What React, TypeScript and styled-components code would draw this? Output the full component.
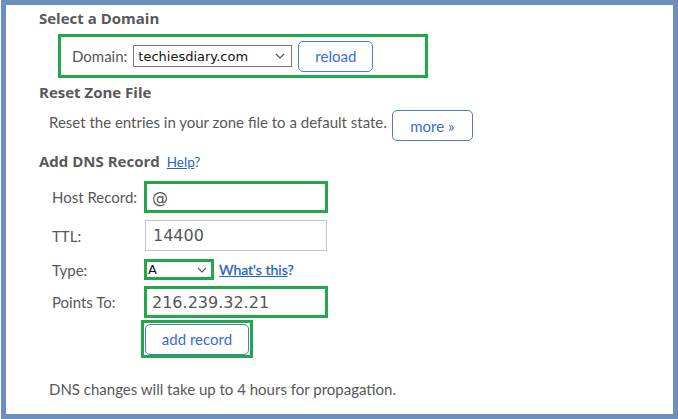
import React from 'react';
import styled, { createGlobalStyle } from 'styled-components';

const GlobalStyle = createGlobalStyle`
  html, body {
    margin: 0;
    padding: 0;
    background: #ffffff;
  }
  body {
    font-family: Lato, "Open Sans", sans-serif;
  }
`;

const Frame = styled.div`
  box-sizing: border-box;
  width: 677px;
  height: 419px;
  margin-left: 1px;
  border: 5px solid #6d8fbe;
  padding: 2px 0 0 33px;
  color: #585858;
  background: #fff;
`;

const Heading = styled.div<{ $mt?: number }>`
  font-family: "Open Sans", Lato, sans-serif;
  font-size: 15px;
  font-weight: 700;
  line-height: 22px;
  margin-top: ${p => p.$mt ?? 0}px;
  color: #595959;
  display: flex;
  align-items: baseline;
  gap: 7px;
`;

const HelpLink = styled.span`
  font-family: Lato, sans-serif;
  font-size: 13.5px;
  font-weight: 400;
  color: #2a63c6;
  span {
    text-decoration: underline;
  }
`;

const Highlight = styled.div`
  box-sizing: border-box;
  border: 3px solid #22a84b;
  display: flex;
  align-items: center;
`;

const DomainBox = styled(Highlight)`
  width: 370px;
  height: 44px;
  margin: 5px 0 0 19px;
  padding-left: 11px;
  gap: 6px;
  font-size: 15px;
`;

const FakeSelect = styled.div<{ $w: number; $h: number; $border: string }>`
  box-sizing: border-box;
  width: ${p => p.$w}px;
  height: ${p => p.$h}px;
  border: 1px solid ${p => p.$border};
  background: #fff;
  display: flex;
  align-items: center;
  justify-content: space-between;
  padding: 0 6px 0 4px;
  font-family: Tahoma, "DejaVu Sans", sans-serif;
  font-size: 13px;
  color: #111;
`;

const Chevron = () => (
  <svg width="10" height="6" viewBox="0 0 10 6">
    <path d="M1 1 L5 5 L9 1" fill="none" stroke="#555" strokeWidth="1.1" />
  </svg>
);

const Button = styled.button<{ $w: number; $h: number }>`
  box-sizing: border-box;
  width: ${p => p.$w}px;
  height: ${p => p.$h}px;
  border: 1px solid #4a7bd2;
  border-radius: 5px;
  background: #fff;
  color: #3a6cd0;
  font-family: Lato, "Open Sans", sans-serif;
  font-size: 15px;
  padding: 0;
  cursor: pointer;
`;

const ResetRow = styled.div`
  display: flex;
  align-items: flex-start;
  margin: 7px 0 0 10px;
  gap: 5px;
  font-size: 15px;
  line-height: 18px;
`;

const ResetText = styled.span`
  padding-top: 3px;
`;

const Form = styled.div`
  display: flex;
  flex-direction: column;
  margin: 8px 0 0 13px;
  font-size: 15px;
`;

const Row = styled.div<{ $mt?: number }>`
  display: flex;
  align-items: center;
  gap: 5px;
  margin-top: ${p => p.$mt ?? 0}px;
`;

const Label = styled.div`
  width: 87px;
`;

const TextInput = styled.input<{ $green?: boolean }>`
  box-sizing: border-box;
  width: ${p => (p.$green ? 184 : 182)}px;
  height: ${p => (p.$green ? 32 : 31)}px;
  margin-left: ${p => (p.$green ? 0 : 1)}px;
  border: ${p => (p.$green ? '3px solid #22a84b' : '1px solid #c4c4c4')};
  padding: 0 ${p => (p.$green ? 5 : 7)}px;
  font-family: Tahoma, "DejaVu Sans", sans-serif;
  font-size: 16px;
  color: #555;
  outline: none;
  background: #fff;
`;

const TypeSelect = styled(Highlight)`
  width: 70px;
  height: 21px;
`;

const InnerSelect = styled(FakeSelect)`
  border: none;
  padding: 0 4px 0 1px;
`;

const Link = styled.span`
  color: #2a63c6;
  font-size: 14px;
  font-weight: 400;
  -webkit-text-stroke: 0.3px #2a63c6;
  span {
    text-decoration: underline;
  }
`;

const AddWrap = styled(Highlight)`
  width: 112px;
  height: 38px;
  margin-left: 89px;
  justify-content: center;
`;

const Footer = styled.div`
  margin: 22px 0 0 10px;
  font-size: 15px;
  line-height: 18px;
`;

export default function App() {
  return (
    <>
      <GlobalStyle />
      <Frame>
        <Heading>Select a Domain</Heading>
        <DomainBox>
          <span>Domain:</span>
          <FakeSelect $w={159} $h={22} $border="#767676">
            <span>techiesdiary.com</span>
            <Chevron />
          </FakeSelect>
          <Button $w={75} $h={31}>reload</Button>
        </DomainBox>

        <Heading $mt={3}>Reset Zone File</Heading>
        <ResetRow>
          <ResetText>Reset the entries in your zone file to a default state.</ResetText>
          <Button $w={81} $h={31}>more »</Button>
        </ResetRow>

        <Heading $mt={9}>
          Add DNS Record
          <HelpLink><span>Help</span>?</HelpLink>
        </Heading>
        <Form>
          <Row>
            <Label>Host Record:</Label>
            <TextInput $green readOnly value="@" />
          </Row>
          <Row $mt={7}>
            <Label>TTL:</Label>
            <TextInput readOnly value="14400" />
          </Row>
          <Row $mt={8}>
            <Label>Type:</Label>
            <TypeSelect>
              <InnerSelect $w={64} $h={15} $border="transparent">
                <span>A</span>
                <Chevron />
              </InnerSelect>
            </TypeSelect>
            <Link><span>What's this</span>?</Link>
          </Row>
          <Row $mt={6}>
            <Label>Points To:</Label>
            <TextInput $green readOnly value="216.239.32.21" />
          </Row>
          <Row $mt={2}>
            <AddWrap>
              <Button $w={104} $h={31}>add record</Button>
            </AddWrap>
          </Row>
        </Form>

        <Footer>DNS changes will take up to 4 hours for propagation.</Footer>
      </Frame>
    </>
  );
}
